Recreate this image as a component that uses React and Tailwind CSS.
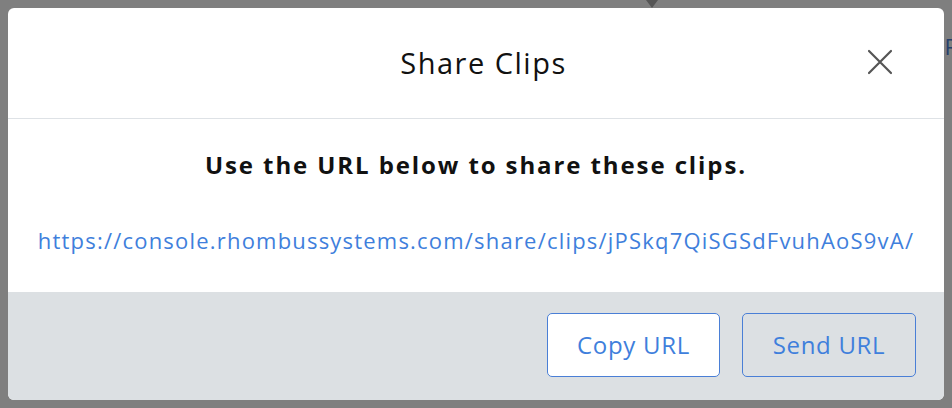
import React from 'react';

const font = { fontFamily: '"Open Sans", Lato, sans-serif' };

export default function App() {
  return (
    <div className="w-[952px] h-[408px] bg-[#7f7f7f] p-2 relative overflow-hidden" style={font}>
      {/* bits of the page behind the overlay */}
      <div className="absolute right-[-6px] top-[30px] text-[22px] text-[#26406b]">R</div>
      <div className="absolute left-[646px] top-0 w-0 h-0 border-l-[6px] border-r-[6px] border-t-[8px] border-l-transparent border-r-transparent border-t-[#555]" />

      <div className="relative h-[392px] w-[936px] bg-white rounded-md overflow-hidden flex flex-col">
        <div className="h-[111px] shrink-0 border-b border-[#dee2e6] flex items-center justify-center pl-[15px] relative">
          <h2 className="text-[29px] tracking-[1.5px] text-[#111] leading-none -mt-[1px]">Share Clips</h2>
          <button className="absolute right-[51px] top-[41px] w-[26px] h-[26px] flex items-center justify-center" aria-label="Close">
            <svg width="26" height="26" viewBox="0 0 26 26" fill="none" stroke="#555" strokeWidth="2.2" strokeLinecap="round">
              <path d="M2 2 L24 24 M24 2 L2 24" />
            </svg>
          </button>
        </div>

        <div className="flex-1 flex flex-col items-center">
          <p className="mt-[32px] text-[24px] tracking-[1.9px] font-bold text-[#111] leading-[28px]">
            Use the URL below to share these clips.
          </p>
          <a className="mt-[48px] text-[22px] tracking-[1.2px] text-[#3f7fdc] leading-[26px] whitespace-nowrap">
            https://console.rhombussystems.com/share/clips/jPSkq7QiSGSdFvuhAoS9vA/
          </a>
        </div>

        <div className="h-[108px] shrink-0 bg-[#dce0e3] flex items-start justify-end gap-[22px] pt-[21px] pr-[28px]">
          <button className="w-[173px] h-[64px] rounded-[5px] border border-[#4a7fd6] bg-white text-[24px] tracking-[0.7px] text-[#3f7fdc]">
            Copy URL
          </button>
          <button className="w-[174px] h-[64px] rounded-[5px] border border-[#4a7fd6] bg-transparent text-[24px] tracking-[0.7px] text-[#3f7fdc]">
            Send URL
          </button>
        </div>
      </div>
    </div>
  );
}
